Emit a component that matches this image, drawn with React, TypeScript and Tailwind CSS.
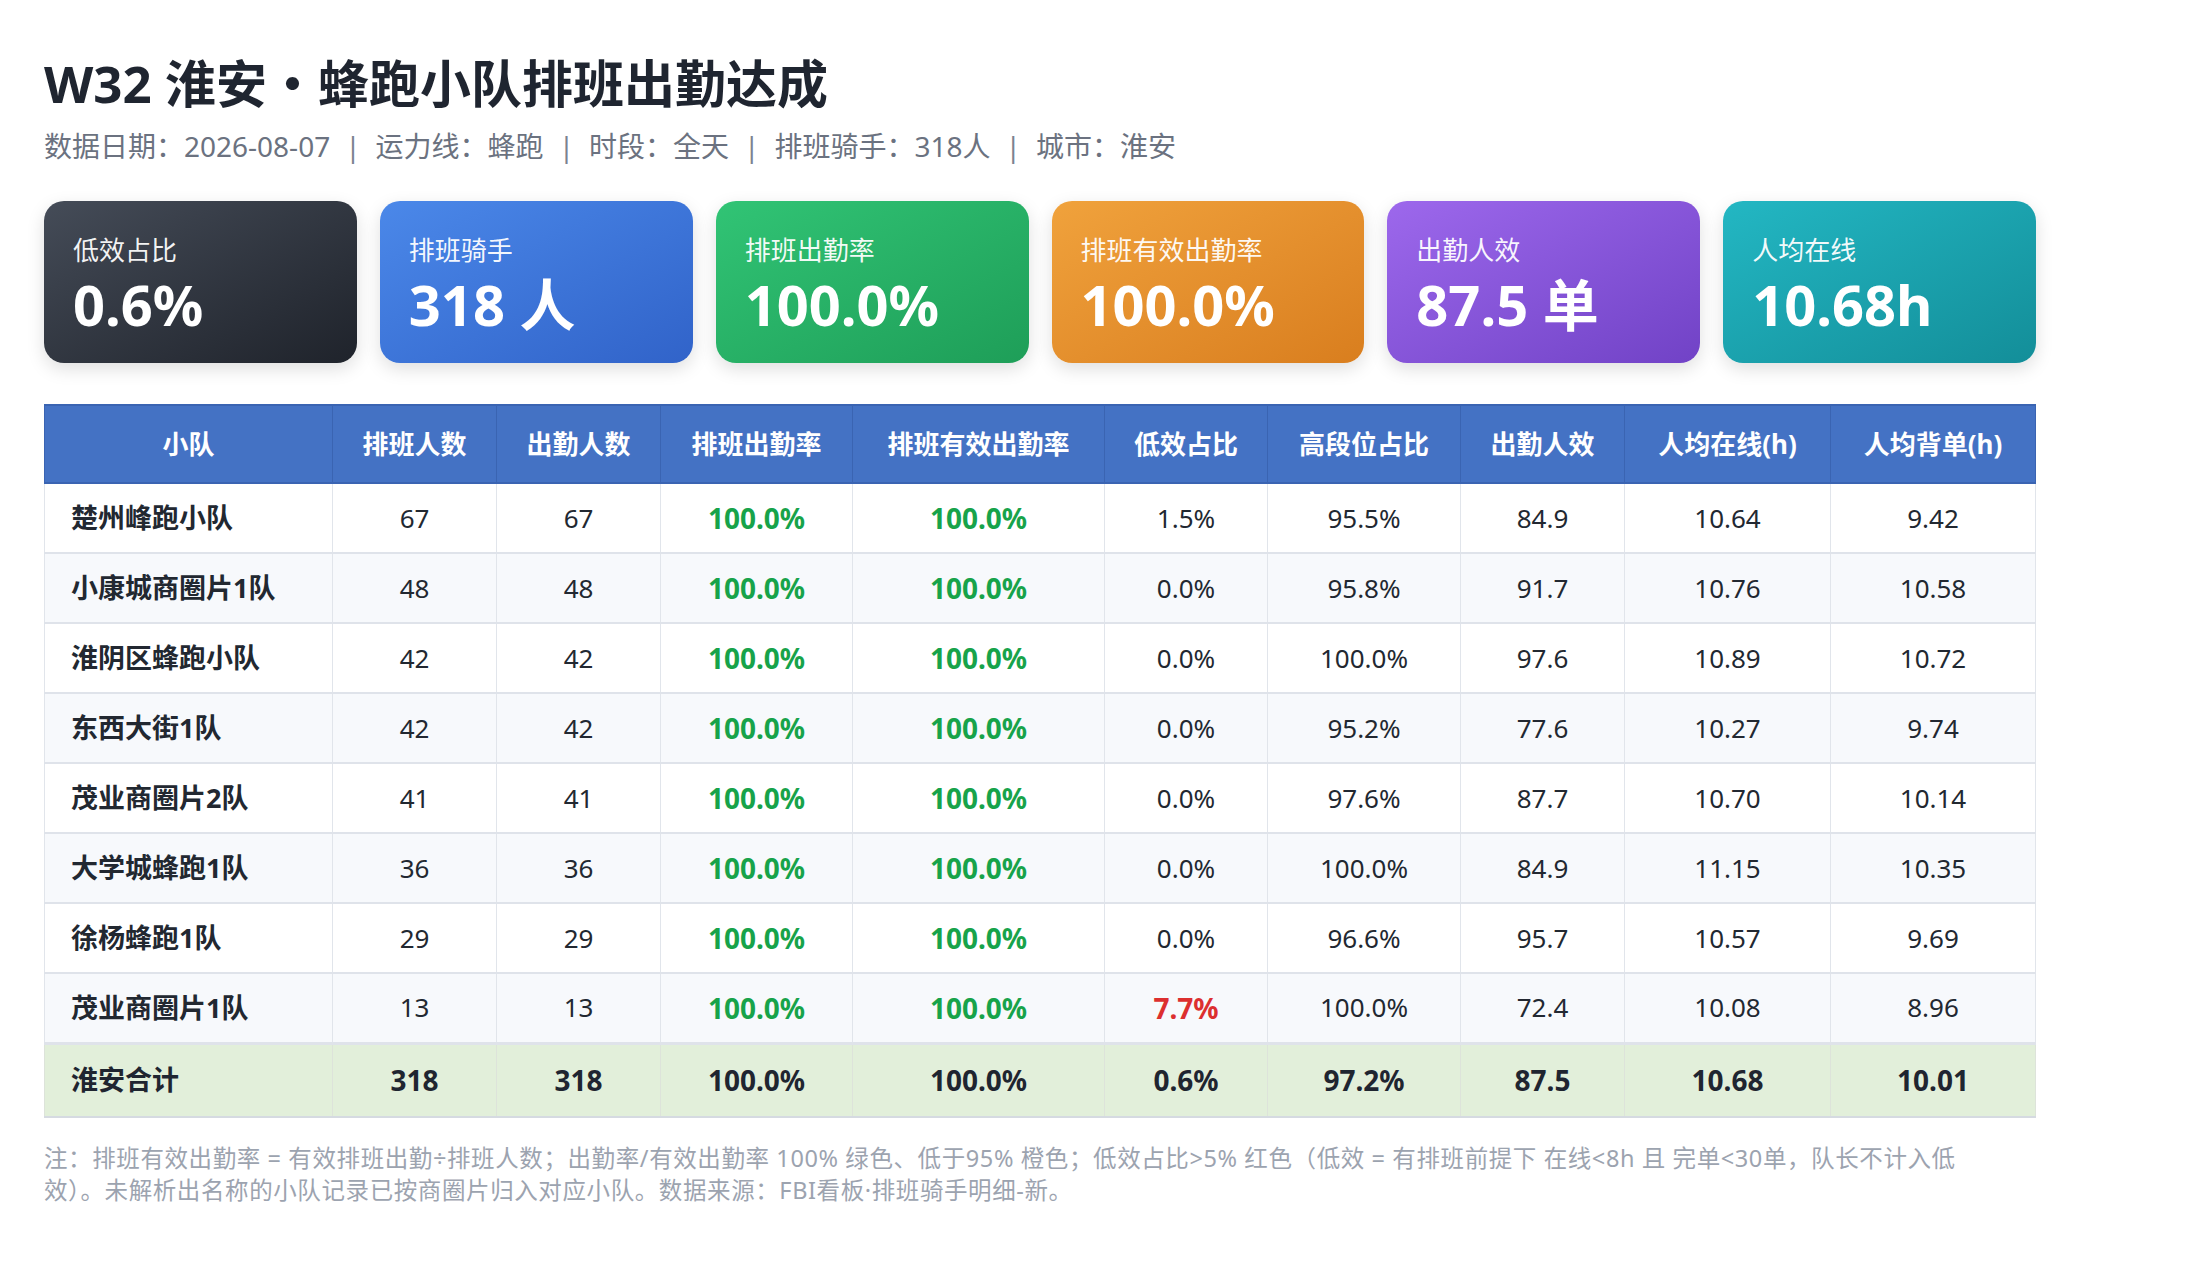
import React from "react";

const cards = [
  { label: "低效占比", value: "0.6%", cls: "bg-gradient-to-br from-[#454c58] to-[#1f232b]" },
  { label: "排班骑手", value: "318 人", cls: "bg-gradient-to-br from-[#4b88e9] to-[#3163c9]" },
  { label: "排班出勤率", value: "100.0%", cls: "bg-gradient-to-br from-[#31c475] to-[#1e9e58]" },
  { label: "排班有效出勤率", value: "100.0%", cls: "bg-gradient-to-br from-[#f0a23c] to-[#d97e1e]" },
  { label: "出勤人效", value: "87.5 单", cls: "bg-gradient-to-br from-[#9d68ec] to-[#7142c6]" },
  { label: "人均在线", value: "10.68h", cls: "bg-gradient-to-br from-[#23b7c3] to-[#138e99]" },
];

const headers = ["小队", "排班人数", "出勤人数", "排班出勤率", "排班有效出勤率", "低效占比", "高段位占比", "出勤人效", "人均在线(h)", "人均背单(h)"];
const widths = ["w-[288px]", "w-[164px]", "w-[164px]", "w-[192px]", "w-[252px]", "w-[163px]", "w-[193px]", "w-[164px]", "w-[206px]", "w-[205px]"];

const rows: string[][] = [
  ["楚州峰跑小队", "67", "67", "100.0%", "100.0%", "1.5%", "95.5%", "84.9", "10.64", "9.42"],
  ["小康城商圈片1队", "48", "48", "100.0%", "100.0%", "0.0%", "95.8%", "91.7", "10.76", "10.58"],
  ["淮阴区蜂跑小队", "42", "42", "100.0%", "100.0%", "0.0%", "100.0%", "97.6", "10.89", "10.72"],
  ["东西大街1队", "42", "42", "100.0%", "100.0%", "0.0%", "95.2%", "77.6", "10.27", "9.74"],
  ["茂业商圈片2队", "41", "41", "100.0%", "100.0%", "0.0%", "97.6%", "87.7", "10.70", "10.14"],
  ["大学城蜂跑1队", "36", "36", "100.0%", "100.0%", "0.0%", "100.0%", "84.9", "11.15", "10.35"],
  ["徐杨蜂跑1队", "29", "29", "100.0%", "100.0%", "0.0%", "96.6%", "95.7", "10.57", "9.69"],
  ["茂业商圈片1队", "13", "13", "100.0%", "100.0%", "7.7%", "100.0%", "72.4", "10.08", "8.96"],
];
const total = ["淮安合计", "318", "318", "100.0%", "100.0%", "0.6%", "97.2%", "87.5", "10.68", "10.01"];

function cellColor(ci: number, v: string) {
  if (ci === 3 || ci === 4) return "text-[28px] text-[#17a34a] font-bold";
  if (ci === 5 && parseFloat(v) > 5) return "text-[28px] text-[#dc2f2f] font-bold";
  return "text-[26px] text-[#222831]";
}

const Sep = () => <span className="mx-[15px] text-[#7b8290]">|</span>;

export default function App() {
  return (
    <div
      className="min-h-[1280px] w-[2200px] bg-white px-[44px] pt-[54px]"
      style={{ fontFamily: '"Noto Sans", "Noto Sans CJK SC", sans-serif' }}
    >
      <div className="w-[1992px]">
        <h1 className="text-[51px] font-bold leading-[58px] text-[#1f2530]">W32 淮安・蜂跑小队排班出勤达成</h1>
        <div className="mt-[16px] text-[28px] leading-[36px] text-[#6b7280]">
          数据日期：2026-08-07<Sep />运力线：蜂跑<Sep />时段：全天<Sep />排班骑手：318人<Sep />城市：淮安
        </div>

        <div className="mt-[37px] grid grid-cols-6 gap-[23px]">
          {cards.map((c) => (
            <div
              key={c.label}
              className={`${c.cls} h-[162px] rounded-[20px] px-[29px] pt-[32px] text-white shadow-[0_6px_18px_rgba(0,0,0,0.13)]`}
            >
              <div className="text-[26px] leading-[34px] text-white/95">{c.label}</div>
              <div className="mt-[5px] text-[56px] font-bold leading-[64px]">{c.value}</div>
            </div>
          ))}
        </div>

        <table className="mt-[41px] w-[1992px] table-fixed border-collapse">
          <colgroup>
            {widths.map((w, i) => (
              <col key={i} className={w} />
            ))}
          </colgroup>
          <thead>
            <tr>
              {headers.map((h) => (
                <th
                  key={h}
                  className="h-[78px] border-x border-t-2 border-b-2 border-[#3a64b2] bg-[#4472c4] text-center text-[26px] font-bold text-white"
                >
                  {h}
                </th>
              ))}
            </tr>
          </thead>
          <tbody>
            {rows.map((r, ri) => (
              <tr key={ri} className={ri % 2 === 0 ? "bg-white" : "bg-[#f7f9fc]"}>
                {r.map((v, ci) => (
                  <td
                    key={ci}
                    className={`h-[70px] border-x border-b-2 border-x-[#e1e5eb] border-b-[#dfe3ea] ${
                      ci === 0 ? "pl-[26px] text-left text-[27px] font-bold text-[#222831]" : `text-center ${cellColor(ci, v)}`
                    } ${ri === rows.length - 1 ? "border-b-[3px] border-b-[#4472c4]" : ""}`}
                  >
                    {v}
                  </td>
                ))}
              </tr>
            ))}
            <tr className="bg-[#e2efda]">
              {total.map((v, ci) => (
                <td
                  key={ci}
                  className={`h-[74px] border-x border-b-2 border-x-[#dde3da] border-b-[#d5dae1] font-bold text-[#1f2530] ${
                    ci === 0 ? "pl-[26px] text-left text-[27px]" : "text-center text-[28px]"
                  }`}
                >
                  {v}
                </td>
              ))}
            </tr>
          </tbody>
        </table>

        <p className="mt-[24px] text-[23.5px] leading-[32px] tracking-[0.6px] text-[#9ca3af]">
          注：排班有效出勤率 = 有效排班出勤÷排班人数；出勤率/有效出勤率 100% 绿色、低于95% 橙色；低效占比&gt;5% 红色（低效 = 有排班前提下 在线&lt;8h 且 完单&lt;30单，队长不计入低
          <br />
          效）。未解析出名称的小队记录已按商圈片归入对应小队。数据来源：FBI看板·排班骑手明细-新。
        </p>
      </div>
    </div>
  );
}
